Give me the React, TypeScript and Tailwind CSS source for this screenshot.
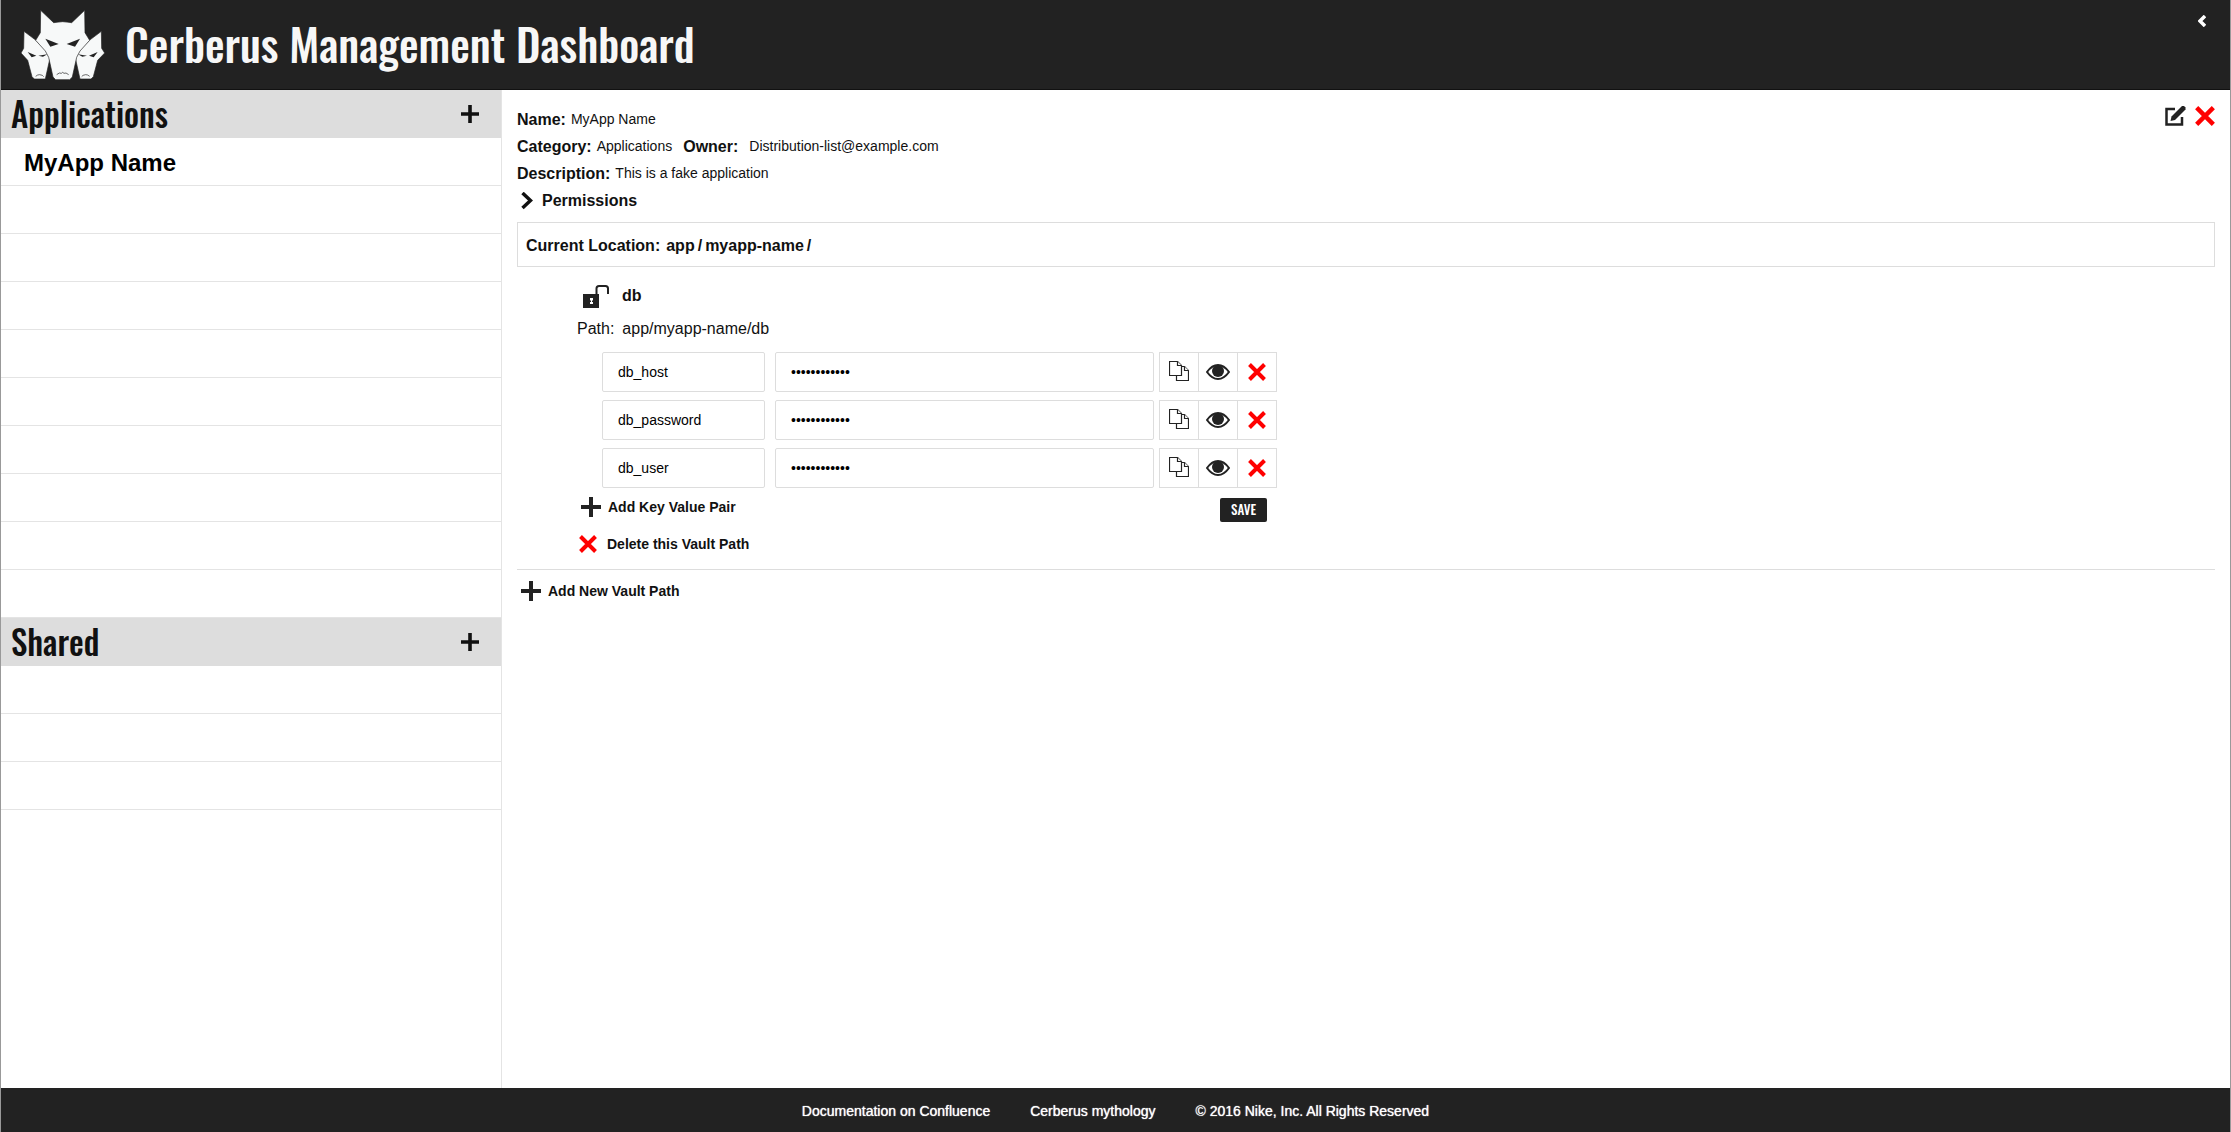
import React from "react";

const heading = "font-['Oswald','Roboto_Condensed','Liberation_Sans_Narrow','Arial_Narrow',sans-serif]";

function Logo() {
  return (
    <svg viewBox="34 17 252 208" className="h-[70px] w-[84px]" aria-hidden="true">
      <g fill="#f7f9f9" stroke="#222" strokeWidth="2" strokeLinejoin="round">
        <path d="M43 80 L79 107 L112 138 L121 160 L107 223 L74 223 L67 216 L54 167 L34 145 L42 131 Z" />
        <path d="M275 80 L239 107 L206 138 L197 160 L211 223 L244 223 L251 216 L264 167 L285 145 L276 131 Z" />
        <path d="M93 17 L132 54 Q159 48 186 54 L225 17 L226 84 L240 107 L211 139 L201 158 L188 217 L180 225 L138 225 L130 217 L117 158 L107 139 L78 107 L92 84 Z" />
      </g>
      <g fill="#222">
        <path d="M107 102 L147 118 L122 126 Z" />
        <path d="M211 102 L171 118 L196 126 Z" />
        <path d="M54 142 L80 153 L66 158 Z M86 153 L113 149 L100 156 Z" />
        <path d="M264 142 L238 153 L252 158 Z M232 153 L205 149 L218 156 Z" />
      </g>
      <g fill="none" stroke="#222" strokeWidth="2">
        <path d="M141 210 L149 205 L155 206 L159 203 L163 206 L169 205 L177 210" />
        <path d="M78 215 L84 211 L90 210 L98 212 L102 216" />
        <path d="M216 216 L220 212 L228 210 L234 211 L240 215" />
      </g>
    </svg>
  );
}

function Plus({ className }: { className: string }) {
  return (
    <svg viewBox="0 0 20 20" className={className} fill="currentColor" aria-hidden="true">
      <path d="M8 0h4v8h8v4h-8v8H8v-8H0V8h8z" />
    </svg>
  );
}

function Cross({ className }: { className: string }) {
  return (
    <svg viewBox="0 0 18 18" className={className} stroke="#f00" strokeWidth="4" aria-hidden="true">
      <path d="M1.5 1.5l15 15M16.5 1.5l-15 15" />
    </svg>
  );
}

function Copy() {
  return (
    <svg viewBox="0 0 20 20" className="h-5 w-5" fill="#fff" stroke="#222" strokeWidth="1.2" aria-hidden="true">
      <path d="M7.5 5.5h8l4 4v10h-12z" />
      <path d="M15.5 5.5v4h4" />
      <path d="M.5.5h8l4 4v10H.5z" />
      <path d="M8.5.5v4h4" />
    </svg>
  );
}

function Eye() {
  return (
    <svg viewBox="0 0 24 16" className="h-4 w-6" aria-hidden="true">
      <path d="M1 8Q6 1 12 1t11 7q-5 7-11 7T1 8z" fill="#fff" stroke="#222" strokeWidth="2" />
      <circle cx="12" cy="7" r="6" fill="#222" />
    </svg>
  );
}

function Unlock() {
  return (
    <svg viewBox="0 0 26 23" className="h-[23px] w-[26px]" aria-hidden="true">
      <path d="M0 9h16v14H0z" fill="#222" />
      <path d="M13.500 9V3.500Q13.500 1 16 1h6.500Q25 1 25 3.500V9" fill="none" stroke="#222" strokeWidth="2" />
      <path d="M7 13h3v2.500H9V17h1v2H7v-2h1v-1.500H7z" fill="#fff" />
    </svg>
  );
}

function Category({ title, items }: { title: string; items: string[] }) {
  return (
    <section>
      <div className="flex h-12 items-center justify-between bg-[#ddd] pr-[22px] pl-[10px] text-[#111]">
        <h2 className={`${heading} text-[33px] leading-[46px] font-medium`}>{title}</h2>
        <button type="button" aria-label={`Add to ${title}`}>
          <Plus className="h-[18px] w-[18px]" />
        </button>
      </div>
      <ul>
        {items.map((name, i) => (
          <li key={i} className="h-12 border-b border-[#e4e4e4]">
            {name && (
              <a href="#myapp" className="block pl-[23px] text-2xl leading-[50px] font-bold text-black">
                {name}
              </a>
            )}
          </li>
        ))}
      </ul>
    </section>
  );
}

function KeyValueRow({ name }: { name: string }) {
  return (
    <div className="flex h-10">
      <input
        aria-label="Key"
        defaultValue={name}
        className="w-[163px] rounded-xs border border-[#ddd] px-[15px] text-sm text-black"
      />
      <input
        type="password"
        aria-label={`Value of ${name}`}
        defaultValue="secretvalue1"
        className="ml-[10px] w-[379px] rounded-xs border border-[#ddd] px-[15px] text-sm text-black"
      />
      <div className="ml-[5px] grid grid-cols-[39px_39px_38px] divide-x divide-[#ddd] border border-[#ddd]">
        <button type="button" aria-label="Copy" className="flex items-center justify-center pb-[2px]">
          <Copy />
        </button>
        <button type="button" aria-label="Show" className="flex items-center justify-center">
          <Eye />
        </button>
        <button type="button" aria-label="Delete" className="flex items-center justify-center">
          <Cross className="h-[18px] w-[18px]" />
        </button>
      </div>
    </div>
  );
}

export default function App() {
  return (
    <div className="flex min-h-screen flex-col border-x border-[#999] bg-white font-['Liberation_Sans',Arial,sans-serif] text-base text-[#111]">
      <header className="flex h-[90px] items-center border-b border-[#111] bg-[#222] pl-5">
        <Logo />
        <h1 className={`${heading} ml-5 pb-[2px] text-[44px] leading-[86px] font-medium whitespace-nowrap text-[#f7f7f7]`}>
          Cerberus Management Dashboard
        </h1>
        <button type="button" aria-label="Open menu" className="mt-[15px] mr-6 ml-auto self-start">
          <svg viewBox="0 0 8 12" className="h-3 w-2" fill="none" stroke="#fff" strokeWidth="3.5" aria-hidden="true">
            <path d="M7 1L2 6l5 5" />
          </svg>
        </button>
      </header>

      <div className="flex grow">
        <nav className="w-[501px] shrink-0 border-r border-[#e4e4e4]">
          <Category title="Applications" items={["MyApp Name", "", "", "", "", "", "", "", "", ""]} />
          <Category title="Shared" items={["", "", ""]} />
        </nav>

        <main className="grow px-[15px] pt-4">
          <div className="flex justify-between">
            <dl className="leading-[27px] [&_dd]:text-sm [&_dd]:leading-[27px] [&_dt]:font-bold">
              <div className="flex gap-[5px]">
                <dt>Name:</dt>
                <dd>MyApp Name</dd>
              </div>
              <div className="flex gap-[5px]">
                <dt>Category:</dt>
                <dd>Applications</dd>
                <dt className="ml-[6px]">Owner:</dt>
                <dd className="ml-[6px]">Distribution-list@example.com</dd>
              </div>
              <div className="flex gap-[5px]">
                <dt>Description:</dt>
                <dd>This is a fake application</dd>
              </div>
            </dl>
            <div className="flex items-start gap-[9px]">
              <button type="button" aria-label="Edit">
                <svg viewBox="0 0 21 20" className="h-5 w-[21px]" aria-hidden="true">
                  <path d="M10 3H1.500v15.500H17V11" fill="none" stroke="#222" strokeWidth="2.5" />
                  <path d="M5.500 15l1-4.500L17 0h2l1.500 1.500v2L10 14z" fill="#222" />
                </svg>
              </button>
              <button type="button" aria-label="Delete safe deposit box">
                <Cross className="h-5 w-5" />
              </button>
            </div>
          </div>
          <button type="button" className="flex h-[27px] items-center gap-[9px] pl-1 font-bold">
            <svg viewBox="0 0 12 18" className="h-[18px] w-3" fill="none" stroke="#111" strokeWidth="3.5" aria-hidden="true">
              <path d="M1.500 1L9.500 8.500l-8 7.500" />
            </svg>
            Permissions
          </button>

          <div className="mt-2 flex h-[45px] items-center gap-[6px] border border-[#ddd] px-2 pt-[2px] font-bold">
            <span>Current Location:</span>
            <span className="flex gap-[3px]">
              <a href="#app">app</a>
              <span>/</span>
              <a href="#myapp-name">myapp-name</a>
              <span>/</span>
            </span>
          </div>

          <section className="mt-[13px] ml-[60px] w-[700px]">
            <h3 className="flex h-8 items-center gap-[13px] pl-[6px] font-bold">
              <Unlock />
              db
            </h3>
            <p className="flex gap-2 leading-[34px]">
              <span>Path:</span>
              <span>app/myapp-name/db</span>
            </p>
            <form className="mt-[6px]">
              <div className="flex flex-col gap-2 pl-[25px]">
                <KeyValueRow name="db_host" />
                <KeyValueRow name="db_password" />
                <KeyValueRow name="db_user" />
              </div>
              <div className="flex h-[38px] items-center justify-between pr-[10px] pl-1">
                <button type="button" className="flex items-center gap-[7px] text-sm font-bold">
                  <Plus className="h-5 w-5 text-[#222]" />
                  Add Key Value Pair
                </button>
                <button
                  type="button"
                  className={`${heading} mt-[6px] h-6 w-[47px] rounded-xs bg-[#222] text-[13px] font-medium text-white`}
                >
                  SAVE
                </button>
              </div>
              <button type="button" className="flex h-9 items-center gap-[10px] pl-[2px] text-sm font-bold">
                <Cross className="h-[18px] w-[18px]" />
                Delete this Vault Path
              </button>
            </form>
          </section>

          <hr className="mt-[7px] border-[#ddd]" />
          <button type="button" className="flex h-[42px] items-center gap-[7px] pl-1 text-sm font-bold">
            <Plus className="h-5 w-5 text-[#222]" />
            Add New Vault Path
          </button>
        </main>
      </div>

      <footer className="flex h-11 items-center justify-center gap-10 bg-[#222] pt-[2px] text-sm text-white text-shadow-[0_0_1px_#fff]">
        <a href="#docs">Documentation on Confluence</a>
        <a href="#mythology">Cerberus mythology</a>
        <span>© 2016 Nike, Inc. All Rights Reserved</span>
      </footer>
    </div>
  );
}
